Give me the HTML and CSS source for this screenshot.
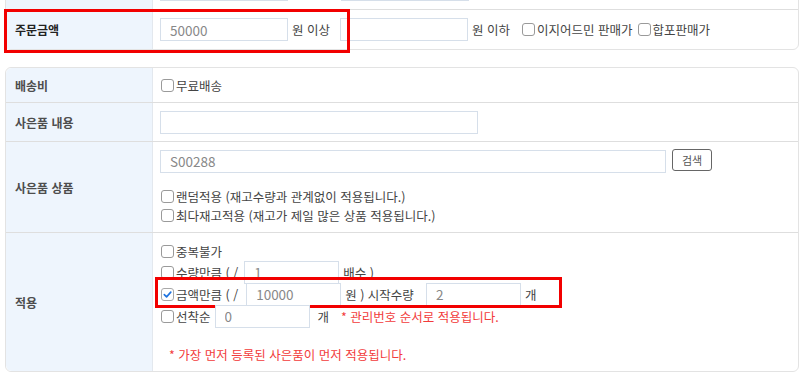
FILE: index.html
```html
<!DOCTYPE html>
<html lang="ko">
<head>
  <meta charset="UTF-8">
  <title>사은품 설정</title>
  <meta name="viewport" content="width=device-width, initial-scale=1.0">
  <link rel="stylesheet" href="styles.css">
</head>
<body>
  <div class="page">
    <!-- 조건 카드 -->
    <div class="card card-top">
      <div class="row row-h40">
        <div class="th"></div>
        <div class="td">
          <input class="inp w128" type="text">
          <span class="spacer"></span>
          <input class="inp w128" type="text">
        </div>
      </div>
      <div class="row row-h40">
        <div class="th th-strong">주문금액</div>
        <div class="td">
          <input class="inp w128" type="text" value="50000">
          <span class="txt">원 이상</span>
          <input class="inp w128" type="text">
          <span class="txt">원 이하</span>
          <label class="chk gap-l"><span class="cb"></span>이지어드민 판매가</label>
          <label class="chk"><span class="cb"></span>합포판매가</label>
        </div>
      </div>
      <div class="mark mark-1"></div>
    </div>

    <div class="card card-main">
      <div class="row row-h35">
        <div class="th">배송비</div>
        <div class="td">
          <label class="chk"><span class="cb"></span>무료배송</label>
        </div>
      </div>
      <div class="row row-h39">
        <div class="th">사은품 내용</div>
        <div class="td">
          <input class="inp w318" type="text">
        </div>
      </div>
      <div class="row row-h91">
        <div class="th">사은품 상품</div>
        <div class="td td-stack">
          <div class="line">
            <input class="inp w506" type="text" value="S00288">
            <button class="btn">검색</button>
          </div>
          <div class="opts">
            <label class="chk"><span class="cb"></span>랜덤적용 (재고수량과 관계없이 적용됩니다.)</label>
            <label class="chk"><span class="cb"></span>최다재고적용 (재고가 제일 많은 상품 적용됩니다.)</label>
          </div>
        </div>
      </div>
      <div class="row row-h139">
        <div class="th">적용</div>
        <div class="td td-stack td-apply">
          <label class="chk line-s"><span class="cb"></span>중복불가</label>
          <div class="line">
            <label class="chk"><span class="cb"></span>수량만큼 ( /</label>
            <input class="inp w95 ml6" type="text" value="1">
            <span class="txt">배수 )</span>
          </div>
          <div class="line">
            <label class="chk"><span class="cb on"><svg viewBox="0 0 12 12" width="11" height="11"><path d="M2.5 6.2 L5 8.6 L9.6 3.4" fill="none" stroke="#1f74e0" stroke-width="1.8" stroke-linecap="round" stroke-linejoin="round"/></svg></span>금액만큼 ( /</label>
            <input class="inp w95 ml8" type="text" value="10000">
            <span class="txt">원 ) 시작수량</span>
            <input class="inp w95 ml2" type="text" value="2">
            <span class="txt">개</span>
            <div class="mark mark-2"></div>
          </div>
          <div class="line">
            <label class="chk"><span class="cb"></span>선착순</label>
            <input class="inp w95 ml4" type="text" value="0">
            <span class="txt txt-tight">개</span>
            <span class="note">* 관리번호 순서로 적용됩니다.</span>
          </div>
          <div class="note note-bottom">* 가장 먼저 등록된 사은품이 먼저 적용됩니다.</div>
        </div>
      </div>
    </div>
  </div>
</body>
</html>
```

FILE: styles.css
```css
body { margin: 0; background: #fff; color: #444; font-family: "Noto Sans CJK KR", "Noto Sans", sans-serif; font-size: 12.5px; overflow: hidden; }
.page { padding: 0 1px 0 5px; }
.card { position: relative; border: 1px solid #e3e3e3; border-radius: 6px; background: #fff; }
.card-top { margin-top: -31px; }
.card-main { margin-top: 17px; }
.row { display: flex; border-top: 1px solid #dedede; }
.row:first-child { border-top: none; }
.row-h40 { height: 39px; }
.row-h35 { height: 34px; }
.row-h39 { height: 38px; }
.row-h91 { height: 90px; }
.row-h139 { height: 138px; }
.th { width: 137px; flex: none; display: flex; align-items: center; padding-left: 9px; background: #eef5fd; border-right: 1px solid #e3e8ee; color: #4d4d4d; font-weight: bold; font-size: 12px; }
.card .row:first-child .th { border-top-left-radius: 6px; }
.card .row:last-child .th { border-bottom-left-radius: 6px; }
.th-strong { color: #222; }
.td { flex: 1; display: flex; align-items: center; padding: 0 7px; }
.td-stack { flex-direction: column; align-items: flex-start; justify-content: flex-start; padding-top: 8px; }
.line { display: flex; align-items: center; height: 22px; position: relative; }
.opts { margin-top: 15px; display: flex; flex-direction: column; }
.opts .chk { height: 19px; }
.td-apply { padding-top: 9px; }
.line-s { height: 19px; }
.inp { height: 23px; box-sizing: border-box; border: 1px solid #d6dfea; border-radius: 0; padding: 0 9px; font-family: inherit; font-size: 13.5px; color: #888; background: #fff; outline: none; }
.w128 { width: 128px; }
.w318 { width: 318px; }
.w506 { width: 506px; }
.w95 { width: 95px; }
.ml2 { margin-left: 2px; }
.ml4 { margin-left: 4px; }
.ml6 { margin-left: 6px; }
.ml8 { margin-left: 8px; }
.spacer { width: 53px; }
.txt { margin: 0 10px 0 4px; color: #444; white-space: nowrap; }
.txt-tight { margin: 0 12px 0 8px; }
.chk { display: inline-flex; align-items: center; white-space: nowrap; color: #444; }
.gap-l { margin-left: 1px; }
.chk + .chk { margin-left: 4px; }
.opts .chk + .chk { margin-left: 0; }
.cb { width: 13px; height: 13px; box-sizing: border-box; border: 1px solid #9a9a9a; border-radius: 3px; background: #fff; margin: 0 2px 0 1px; display: inline-flex; align-items: center; justify-content: center; flex: none; }
.cb.on { border-color: #a8a8a8; }
.btn { margin-left: 6px; height: 22px; padding: 0 9px; border: 1px solid #666; border-radius: 3px; background: #fff; color: #555; font-family: inherit; font-size: 11px; position: relative; top: -1px; }
.note { color: #f23b3b; white-space: nowrap; }
.note-bottom { margin: 18px 0 0 9px; }
.mark { position: absolute; border: 3px solid #f20000; pointer-events: none; }
.mark-1 { left: -2px; top: 39px; width: 340px; height: 38px; }
.mark-2 { left: -5px; top: -6px; width: 401px; height: 25px; }
```
